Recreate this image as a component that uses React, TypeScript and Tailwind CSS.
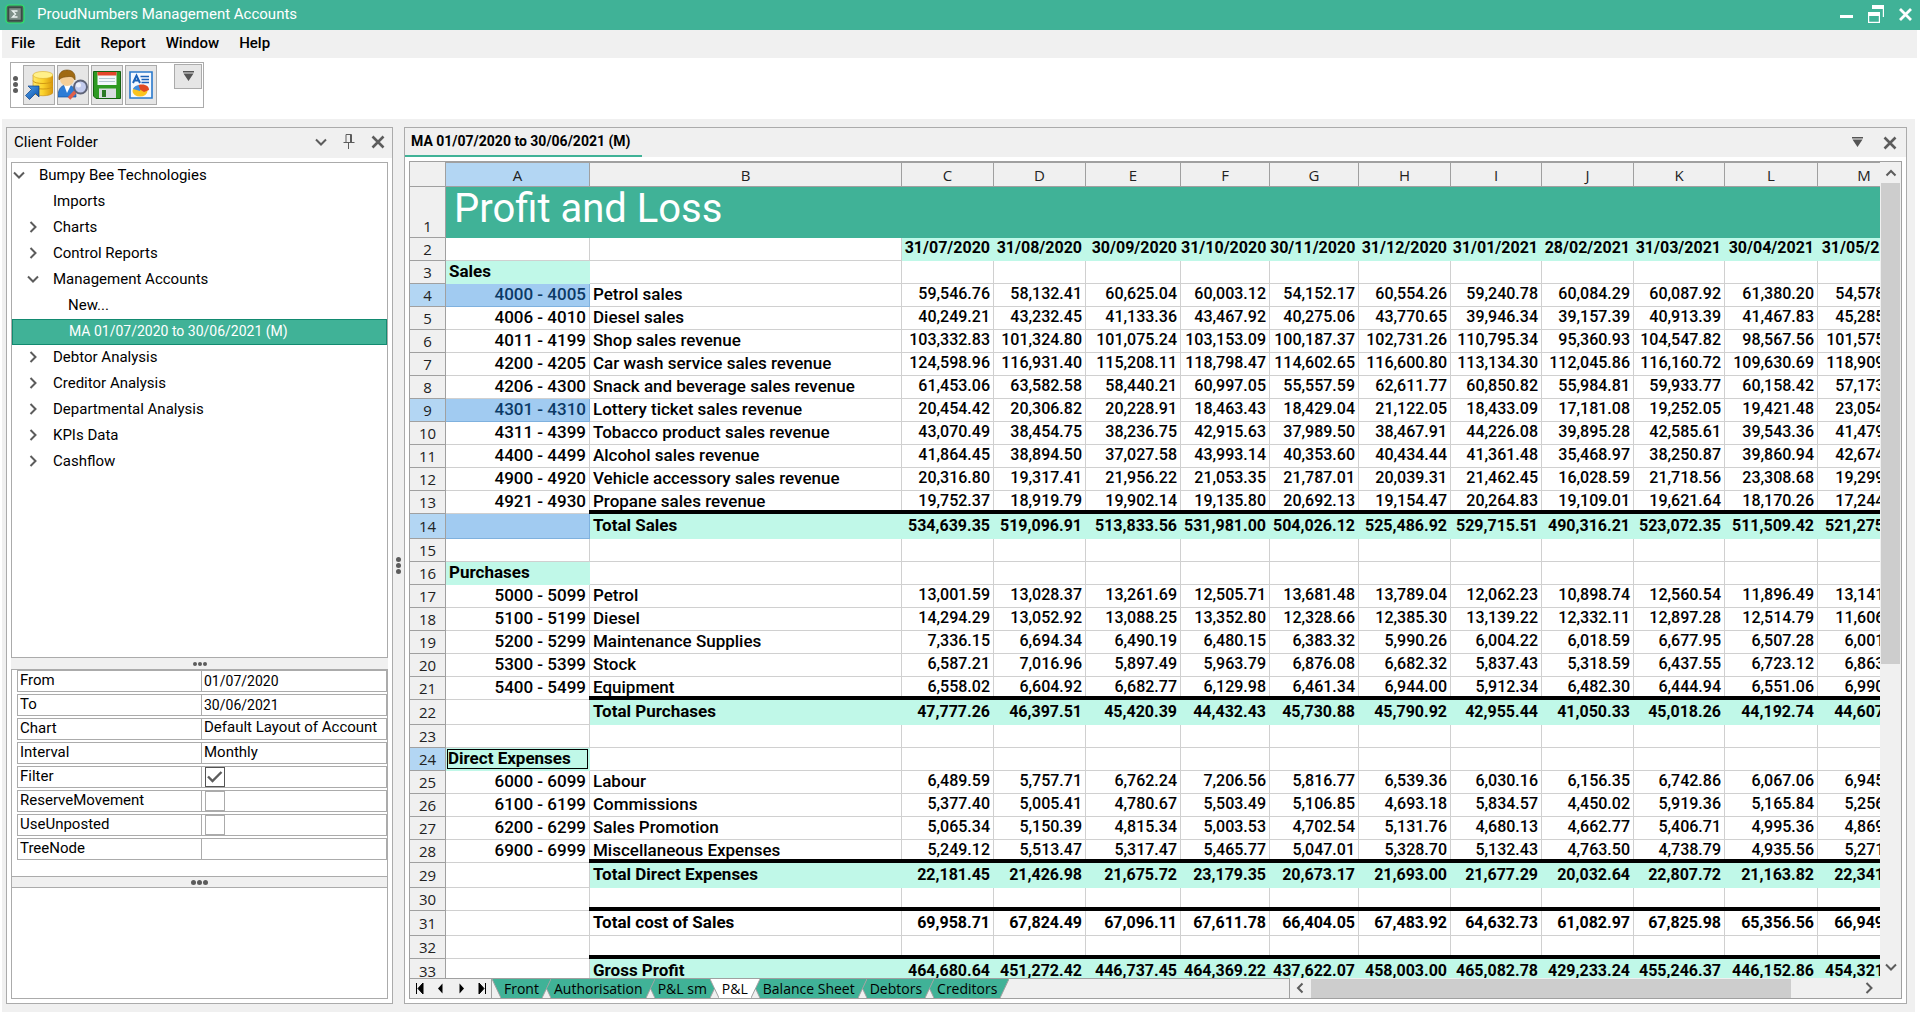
import React from "react";

type Row = { n: number; a?: string; b?: string; v?: string[]; kind?: "total" | "bold"; thick?: boolean; head?: boolean; sel?: boolean };

const cols = ["C", "D", "E", "F", "G", "H", "I", "J", "K", "L", "M"];
const colWidths = ["w-[36px]", "w-[144px]", "w-[312px]", "w-[92px]", "w-[92px]", "w-[95px]", "w-[89px]", "w-[89px]", "w-[92px]", "w-[91px]", "w-[92px]", "w-[91px]", "w-[93px]", "w-[93px]"];

const s = (t: string) => t.split(" ");

const dates = s("31/07/2020 31/08/2020 30/09/2020 31/10/2020 30/11/2020 31/12/2020 31/01/2021 28/02/2021 31/03/2021 30/04/2021 31/05/2021");

const rows: Row[] = [
  { n: 3, a: "Sales", head: true },
  { n: 4, a: "4000 - 4005", b: "Petrol sales", sel: true, v: s("59,546.76 58,132.41 60,625.04 60,003.12 54,152.17 60,554.26 59,240.78 60,084.29 60,087.92 61,380.20 54,578.33") },
  { n: 5, a: "4006 - 4010", b: "Diesel sales", v: s("40,249.21 43,232.45 41,133.36 43,467.92 40,275.06 43,770.65 39,946.34 39,157.39 40,913.39 41,467.83 45,285.60") },
  { n: 6, a: "4011 - 4199", b: "Shop sales revenue", v: s("103,332.83 101,324.80 101,075.24 103,153.09 100,187.37 102,731.26 110,795.34 95,360.93 104,547.82 98,567.56 101,575.21") },
  { n: 7, a: "4200 - 4205", b: "Car wash service sales revenue", v: s("124,598.96 116,931.40 115,208.11 118,798.47 114,602.65 116,600.80 113,134.30 112,045.86 116,160.72 109,630.69 118,909.14") },
  { n: 8, a: "4206 - 4300", b: "Snack and beverage sales revenue", v: s("61,453.06 63,582.58 58,440.21 60,997.05 55,557.59 62,611.77 60,850.82 55,984.81 59,933.77 60,158.42 57,173.12") },
  { n: 9, a: "4301 - 4310", b: "Lottery ticket sales revenue", sel: true, v: s("20,454.42 20,306.82 20,228.91 18,463.43 18,429.04 21,122.05 18,433.09 17,181.08 19,252.05 19,421.48 23,054.40") },
  { n: 10, a: "4311 - 4399", b: "Tobacco product sales revenue", v: s("43,070.49 38,454.75 38,236.75 42,915.63 37,989.50 38,467.91 44,226.08 39,895.28 42,585.61 39,543.36 41,479.31") },
  { n: 11, a: "4400 - 4499", b: "Alcohol sales revenue", v: s("41,864.45 38,894.50 37,027.58 43,993.14 40,353.60 40,434.44 41,361.48 35,468.97 38,250.87 39,860.94 42,674.45") },
  { n: 12, a: "4900 - 4920", b: "Vehicle accessory sales revenue", v: s("20,316.80 19,317.41 21,956.22 21,053.35 21,787.01 20,039.31 21,462.45 16,028.59 21,718.56 23,308.68 19,299.17") },
  { n: 13, a: "4921 - 4930", b: "Propane sales revenue", thick: true, v: s("19,752.37 18,919.79 19,902.14 19,135.80 20,692.13 19,154.47 20,264.83 19,109.01 19,621.64 18,170.26 17,244.80") },
  { n: 14, b: "Total Sales", kind: "total", sel: true, v: s("534,639.35 519,096.91 513,833.56 531,981.00 504,026.12 525,486.92 529,715.51 490,316.21 523,072.35 511,509.42 521,275.53") },
  { n: 15 },
  { n: 16, a: "Purchases", head: true },
  { n: 17, a: "5000 - 5099", b: "Petrol", v: s("13,001.59 13,028.37 13,261.69 12,505.71 13,681.48 13,789.04 12,062.23 10,898.74 12,560.54 11,896.49 13,141.20") },
  { n: 18, a: "5100 - 5199", b: "Diesel", v: s("14,294.29 13,052.92 13,088.25 13,352.80 12,328.66 12,385.30 13,139.22 12,332.11 12,897.28 12,514.79 11,606.02") },
  { n: 19, a: "5200 - 5299", b: "Maintenance Supplies", v: s("7,336.15 6,694.34 6,490.19 6,480.15 6,383.32 5,990.26 6,004.22 6,018.59 6,677.95 6,507.28 6,001.11") },
  { n: 20, a: "5300 - 5399", b: "Stock", v: s("6,587.21 7,016.96 5,897.49 5,963.79 6,876.08 6,682.32 5,837.43 5,318.59 6,437.55 6,723.12 6,863.40") },
  { n: 21, a: "5400 - 5499", b: "Equipment", thick: true, v: s("6,558.02 6,604.92 6,682.77 6,129.98 6,461.34 6,944.00 5,912.34 6,482.30 6,444.94 6,551.06 6,990.05") },
  { n: 22, b: "Total Purchases", kind: "total", v: s("47,777.26 46,397.51 45,420.39 44,432.43 45,730.88 45,790.92 42,955.44 41,050.33 45,018.26 44,192.74 44,607.78") },
  { n: 23 },
  { n: 24, a: "Direct Expenses", head: true },
  { n: 25, a: "6000 - 6099", b: "Labour", v: s("6,489.59 5,757.71 6,762.24 7,206.56 5,816.77 6,539.36 6,030.16 6,156.35 6,742.86 6,067.06 6,945.02") },
  { n: 26, a: "6100 - 6199", b: "Commissions", v: s("5,377.40 5,005.41 4,780.67 5,503.49 5,106.85 4,693.18 5,834.57 4,450.02 5,919.36 5,165.84 5,256.30") },
  { n: 27, a: "6200 - 6299", b: "Sales Promotion", v: s("5,065.34 5,150.39 4,815.34 5,003.53 4,702.54 5,131.76 4,680.13 4,662.77 5,406.71 4,995.36 4,869.05") },
  { n: 28, a: "6900 - 6999", b: "Miscellaneous Expenses", thick: true, v: s("5,249.12 5,513.47 5,317.47 5,465.77 5,047.01 5,328.70 5,132.43 4,763.50 4,738.79 4,935.56 5,271.11") },
  { n: 29, b: "Total Direct Expenses", kind: "total", v: s("22,181.45 21,426.98 21,675.72 23,179.35 20,673.17 21,693.00 21,677.29 20,032.64 22,807.72 21,163.82 22,341.48") },
  { n: 30, thick: true },
  { n: 31, b: "Total cost of Sales", kind: "bold", v: s("69,958.71 67,824.49 67,096.11 67,611.78 66,404.05 67,483.92 64,632.73 61,082.97 67,825.98 65,356.56 66,949.26") },
  { n: 32, thick: true },
  { n: 33, b: "Gross Profit", kind: "total", v: s("464,680.64 451,272.42 446,737.45 464,369.22 437,622.07 458,003.00 465,082.78 429,233.24 455,246.37 446,152.86 454,321.27") },
];

function RowHead({ n, active, tall }: { n: number; active?: boolean; tall?: boolean }) {
  return (
    <th
      scope="row"
      className={`border-r border-b border-[#a0a0a0] p-0 text-center font-['Open_Sans',sans-serif] text-[15px] font-normal text-[#222] leading-[22px] ${tall ? "align-bottom" : "align-middle"} ${active ? "bg-[#b3d6f3]" : "bg-[#f0f0f0]"}`}
    >
      {n}
    </th>
  );
}

function SheetRow({ row }: { row: Row }) {
  const strong = row.kind === "total" || row.kind === "bold";
  const mint = row.kind === "total";
  const line = row.thick
    ? "relative border-r border-[#d0d0d0] after:absolute after:bottom-0 after:-right-px after:-left-px after:h-1 after:bg-black"
    : mint
      ? "border-r border-b border-[#c0f8e8] bg-[#c0f8e8]"
      : "border-r border-b border-[#d0d0d0]";
  const text = strong ? "font-bold leading-[23px]" : "font-medium leading-5";
  return (
    <tr className={strong ? "h-[25px]" : "h-[23px]"}>
      <RowHead n={row.n} active={row.sel || row.n === 24} />
      {row.head ? (
        <td className="border-r border-b border-[#c0f8e8] bg-[#c0f8e8] p-0 align-top text-[17px] font-bold">
          {row.n === 24 ? (
            <div className="m-px h-5 border border-black text-left leading-[17px]">{row.a}</div>
          ) : (
            <div className="pl-[3px] leading-5">{row.a}</div>
          )}
        </td>
      ) : (
        <td
          className={`border-r border-b py-0 pr-[3px] pl-0 text-right align-top text-[17px] leading-5 font-medium ${row.sel ? "border-[#7fb1de] bg-[#a1cbf1] text-[#0c3a66]" : "border-[#d0d0d0]"}`}
        >
          {row.a}
        </td>
      )}
      <td className={`py-0 pr-0 pl-[3px] align-top text-[17px] ${line} ${text}`}>{row.b}</td>
      {cols.map((c, i) => (
        <td key={c} className={`py-0 pr-[3px] pl-0 text-right align-top ${line} ${text}`}>
          {row.v ? row.v[i] : null}
        </td>
      ))}
    </tr>
  );
}

function Sheet() {
  return (
    <table className="w-[1501px] table-fixed border-separate border-spacing-0 text-[16px] text-black">
      <colgroup>
        {colWidths.map((w, i) => (
          <col key={i} className={w} />
        ))}
      </colgroup>
      <thead>
        <tr className="h-[25px] font-['Open_Sans',sans-serif] text-[15px] leading-5 text-[#222]">
          <td className="border-r border-b border-[#a0a0a0] bg-[#f0f0f0] p-0" />
          {["A", "B", ...cols].map((c) => (
            <th
              key={c}
              scope="col"
              className={`border-t border-r border-b border-[#a0a0a0] p-0 font-normal ${c === "A" ? "bg-[#b3d6f3]" : "bg-[#f0f0f0]"}`}
            >
              {c}
            </th>
          ))}
        </tr>
      </thead>
      <tbody>
        <tr className="h-[51px]">
          <RowHead n={1} tall />
          <td colSpan={13} className="bg-[#40b297] py-0 pr-0 pl-2 align-top text-[40px] leading-[44px] text-white">
            Profit and Loss
          </td>
        </tr>
        <tr className="h-[23px]">
          <RowHead n={2} />
          <td className="border-r border-b border-[#d0d0d0] p-0" />
          <td className="border-r border-b border-[#d0d0d0] p-0" />
          {dates.map((d) => (
            <td key={d} className="border-b border-[#c0f8e8] bg-[#c0f8e8] py-0 pr-1 pl-0 text-right align-top leading-5 font-bold">
              {d}
            </td>
          ))}
        </tr>
        {rows.map((r) => (
          <SheetRow key={r.n} row={r} />
        ))}
      </tbody>
    </table>
  );
}

function Chevron({ dir, size = 12 }: { dir: "down" | "right" | "up" | "left"; size?: number }) {
  const d = { down: "M1 3.500l5 5 5-5", right: "M3.500 1l5 5-5 5", up: "M1.500 8.500L6 4l4.500 4.500", left: "M8.500 1.500L4 6l4.500 4.500" }[dir];
  return (
    <svg width={size} height={size} viewBox="0 0 12 12" fill="none" stroke="#5c5c5c" strokeWidth="2">
      <path d={d} />
    </svg>
  );
}

function Close() {
  return (
    <svg width="14" height="14" viewBox="0 0 14 14" stroke="#5c5c5c" strokeWidth="2.6" fill="none">
      <path d="M1.500 1.500l11 11M12.500 1.500l-11 11" />
    </svg>
  );
}

function Overflow() {
  return (
    <svg width="11" height="11" viewBox="0 0 11 11" fill="#555">
      <path d="M0 0h11v1.500H0zM0.500 2.500h10L5.500 10z" />
    </svg>
  );
}

const tree: { label: string; level: number; state?: "open" | "closed"; sel?: boolean }[] = [
  { label: "Bumpy Bee Technologies", level: 0, state: "open" },
  { label: "Imports", level: 1 },
  { label: "Charts", level: 1, state: "closed" },
  { label: "Control Reports", level: 1, state: "closed" },
  { label: "Management Accounts", level: 1, state: "open" },
  { label: "New...", level: 2 },
  { label: "MA 01/07/2020 to 30/06/2021 (M)", level: 2, sel: true },
  { label: "Debtor Analysis", level: 1, state: "closed" },
  { label: "Creditor Analysis", level: 1, state: "closed" },
  { label: "Departmental Analysis", level: 1, state: "closed" },
  { label: "KPIs Data", level: 1, state: "closed" },
  { label: "Cashflow", level: 1, state: "closed" },
];
const indent = ["pl-px", "pl-[15px]", "pl-[30px]"];

function PropRow({ id, label, children }: { id: string; label: string; children: React.ReactNode }) {
  return (
    <div className="flex h-[22px] border border-[#ababab]">
      <label htmlFor={id} className="w-[184px] shrink-0 border-r border-[#ababab] pl-[2px] leading-[18px]">
        {label}
      </label>
      <div className="flex min-w-0 flex-1 pl-[2px]">{children}</div>
    </div>
  );
}

function Check({ id, on }: { id: string; on?: boolean }) {
  return (
    <span className="relative ml-px block size-5">
      <input
        id={id}
        type="checkbox"
        defaultChecked={on}
        className="block size-5 appearance-none border border-[#ababab] bg-white checked:border-[#555]"
      />
      {on && (
        <svg className="pointer-events-none absolute inset-0" width="20" height="20" viewBox="0 0 20 20" fill="none" stroke="#5c5c5c" strokeWidth="2.4">
          <path d="M3 9.500l4.500 4.500L16.500 5" />
        </svg>
      )}
    </span>
  );
}

function Dots({ big }: { big?: boolean }) {
  return (
    <span className="flex gap-px">
      {[0, 1, 2].map((i) => (
        <span key={i} className={`rounded-full bg-[#5c5c5c] ${big ? "size-[5px]" : "size-1"}`} />
      ))}
    </span>
  );
}

function ClientFolder() {
  return (
    <aside className="flex w-[387px] shrink-0 flex-col border border-[#ababab] bg-white text-[15px]">
      <header className="flex h-[30px] shrink-0 items-center bg-[#f0f0f0] pr-[7px] pb-[2px] pl-[7px]">
        <h2 className="flex-1 leading-5">Client Folder</h2>
        <div className="flex items-center gap-4">
          <button aria-label="Options">
            <Chevron dir="down" />
          </button>
          <button aria-label="Pin">
            <svg width="12" height="16" viewBox="0 0 12 16" fill="none" stroke="#5c5c5c" strokeWidth="1">
              <path d="M3 .5h5.500v8H3zM7.500 1v8M.5 8.500h11M5.500 9v6" />
            </svg>
          </button>
          <button aria-label="Close panel">
            <Close />
          </button>
        </div>
      </header>
      <div className="flex min-h-0 flex-1 flex-col p-1">
        <ul className="min-h-0 flex-1 overflow-hidden border border-[#ababab]">
          {tree.map((t) => (
            <li key={t.label}>
              <button
                className={`flex h-[26px] w-full items-center pb-[2px] text-left ${indent[t.level]} ${t.sel ? "border border-[#128a70] bg-[#40b297] text-[14px] text-white" : ""}`}
              >
                <span className="w-[26px] shrink-0">{t.state && <Chevron dir={t.state === "open" ? "down" : "right"} />}</span>
                <span className="leading-5">{t.label}</span>
              </button>
            </li>
          ))}
        </ul>
        <div className="flex h-[11px] shrink-0 items-center justify-center bg-[#f0f0f0]">
          <Dots />
        </div>
        <div className="flex h-[208px] shrink-0 flex-col gap-[2px] border border-[#ababab] pl-[5px]">
          <PropRow id="from" label="From">
            <input id="from" defaultValue="01/07/2020" className="w-full text-[14px] leading-[18px]" />
          </PropRow>
          <PropRow id="to" label="To">
            <input id="to" defaultValue="30/06/2021" className="w-full text-[14px] leading-[18px]" />
          </PropRow>
          <PropRow id="chart" label="Chart">
            <select id="chart" className="h-4 w-full appearance-none leading-4">
              <option>Default Layout of Account</option>
            </select>
          </PropRow>
          <PropRow id="interval" label="Interval">
            <select id="interval" className="h-[18px] w-full appearance-none leading-[18px]">
              <option>Monthly</option>
            </select>
          </PropRow>
          <PropRow id="filter" label="Filter">
            <Check id="filter" on />
          </PropRow>
          <PropRow id="reserve" label="ReserveMovement">
            <Check id="reserve" />
          </PropRow>
          <PropRow id="unposted" label="UseUnposted">
            <Check id="unposted" />
          </PropRow>
          <PropRow id="node" label="TreeNode">
            <input id="node" className="w-full" />
          </PropRow>
        </div>
        <div className="flex h-[10px] shrink-0 items-center justify-center border-x border-[#ababab] bg-[#f0f0f0]">
          <Dots big />
        </div>
        <div className="h-[112px] shrink-0 border border-[#ababab]" />
      </div>
    </aside>
  );
}

const sheetTabs = ["Front", "Authorisation", "P&L sm", "P&L", "Balance Sheet", "Debtors", "Creditors"];
const active = "P&L";

/* Slanted joint between two neighbouring sheet tabs; the active tab lies on top. */
function Seam({ left, right }: { left?: string; right?: string }) {
  const fill = (t?: string) => (t === undefined ? "#f0f0f0" : t === active ? "#fff" : "#40b297");
  const back = right === active || left === undefined;
  return (
    <svg width="9" height="19" viewBox="0 0 9 19" className="shrink-0">
      {back ? (
        <>
          <path d="M0 0L4.500 9.500 0 19z" fill={fill(left)} />
          <path d="M0 0h9v19z" fill={fill(right)} />
          <path d={left ? "M0 0l9 19M4.500 9.500L0 19" : "M0 0l9 19"} fill="none" stroke="#a0a0a0" />
        </>
      ) : (
        <>
          <path d="M9 0v19L4.500 9.500z" fill={fill(right)} />
          <path d="M0 0h9L0 19z" fill={fill(left)} />
          <path d={right ? "M9 0L0 19M4.500 9.500L9 19" : "M9 0L0 19"} fill="none" stroke="#a0a0a0" />
        </>
      )}
    </svg>
  );
}

function SheetTabs() {
  return (
    <div className="flex h-5 shrink-0 bg-[#f0f0f0]">
      <div className="flex flex-1 border-t border-r border-[#a0a0a0]">
        <div className="flex w-[82px] items-center justify-between border-r border-[#a0a0a0] pr-1 pl-[5px]">
          {["M1.500 0v11M8 0L3 5.500 8 11z", "M7.500 .5L3 5.500l4.500 5z", "M3.500 .5L8 5.500l-4.500 5z", "M3 0l5 5.500L3 11zM9.500 0v11"].map((d, i) => (
            <button key={i} aria-label={["First sheet", "Previous sheet", "Next sheet", "Last sheet"][i]}>
              <svg width="11" height="11" viewBox="0 0 11 11" fill="#000" stroke="#000" strokeWidth={i % 3 ? 0 : 1}>
                <path d={d} />
              </svg>
            </button>
          ))}
        </div>
        <div role="tablist" className="flex font-['Open_Sans',sans-serif] text-[14px] leading-[18px]">
          <Seam right={sheetTabs[0]} />
          {sheetTabs.map((t, i) => (
            <React.Fragment key={t}>
              <button
                role="tab"
                aria-selected={t === active}
                className={`h-[19px] px-[3px] whitespace-nowrap ${t === active ? "bg-white" : "bg-[#40b297]"}`}
              >
                {t}
              </button>
              <Seam left={t} right={sheetTabs[i + 1]} />
            </React.Fragment>
          ))}
        </div>
      </div>
      <div className="flex w-[591px] shrink-0 items-center gap-[5px] pl-1">
        <button aria-label="Scroll left">
          <Chevron dir="left" />
        </button>
        <div className="h-[19px] w-[480px] bg-[#cdcdcd]" />
        <span className="flex-1" />
        <button aria-label="Scroll right" className="mr-[6px]">
          <Chevron dir="right" />
        </button>
      </div>
      <div className="w-[20px] shrink-0" />
    </div>
  );
}

function ToolButton({ label, children }: { label: string; children: React.ReactNode }) {
  return (
    <button aria-label={label} className="flex h-10 w-8 items-center justify-center border border-[#ababab] bg-[#e6e6e6]">
      {children}
    </button>
  );
}

function Toolbar() {
  return (
    <div className="flex h-[61px] shrink-0 items-start bg-white pt-1 pl-2">
      <div className="flex h-[46px] w-[194px] items-start gap-[2px] border border-[#ababab] pt-[2px] pl-[2px]">
        <span className="mt-[11px] mr-[3px] flex w-[5px] flex-col gap-px">
          {[0, 1, 2].map((i) => (
            <span key={i} className="size-[5px] rounded-full bg-[#5c5c5c]" />
          ))}
        </span>
        <ToolButton label="Import data">
          <svg width="28" height="30" viewBox="0 0 28 30">
            <defs>
              <linearGradient id="gold" x1="0" x2="1">
                <stop offset="0" stopColor="#ffe96b" />
                <stop offset=".5" stopColor="#fbd22b" />
                <stop offset="1" stopColor="#d9960c" />
              </linearGradient>
              <linearGradient id="arrow" x1="0" y1="0" x2="1" y2="1">
                <stop offset="0" stopColor="#4fa4ee" />
                <stop offset="1" stopColor="#0b4ea8" />
              </linearGradient>
            </defs>
            <path d="M8 5v17c0 5 20 5 20 0V5z" fill="url(#gold)" stroke="#c48a10" strokeWidth=".6" />
            <path d="M8 10.500c0 4 20 4 20 0M8 16c0 4 20 4 20 0" fill="none" stroke="#d29a14" />
            <ellipse cx="18" cy="5" rx="10" ry="3.500" fill="#fff08a" stroke="#dcae28" strokeWidth=".6" />
            <path d="M3 16h11v11l-3.500-3.500L4.500 29.500 .5 25.500 6.500 19.500z" fill="url(#arrow)" stroke="#0c3d82" strokeWidth=".7" />
          </svg>
        </ToolButton>
        <ToolButton label="Find client">
          <svg width="30" height="32" viewBox="0 0 30 32">
            <path d="M0 28c0-9 4-12 9-12s9 3 9 12z" fill="#2c7cd6" stroke="#15509b" strokeWidth=".7" />
            <path d="M6 16l3 8 4-8z" fill="#fff" />
            <circle cx="9" cy="10" r="7" fill="#f5cf98" />
            <path d="M1 11C0 4 4 1 9 1s9 3 8 10c-1-2-3-4-6-3.500C7 8 3 8 1 11z" fill="#a06a12" stroke="#6f4607" strokeWidth=".6" />
            <path d="M17.500 22.500L11 29.500" stroke="#e0604a" strokeWidth="3.500" />
            <circle cx="22.500" cy="18" r="6.500" fill="#c3cbee" stroke="#5f6478" strokeWidth="2" />
            <circle cx="20.500" cy="16" r="2.500" fill="#eef1fc" />
          </svg>
        </ToolButton>
        <ToolButton label="Save">
          <svg width="28" height="28" viewBox="0 0 28 28">
            <path d="M.5.500h27v27H3L.5 25z" fill="#2e9a22" stroke="#14620f" />
            <path d="M4.500 1h19v13h-19z" fill="#f3f8fb" />
            <path d="M4.500 1h19v3.500h-19z" fill="#e4462b" />
            <path d="M6 7.500h16M6 10.500h16" stroke="#b4c6d0" />
            <path d="M6 17.500h17V27H6z" fill="#d9dde0" />
            <path d="M9 19h4v7H9z" fill="#2c7a26" />
          </svg>
        </ToolButton>
        <ToolButton label="Report">
          <svg width="24" height="28" viewBox="0 0 24 28">
            <path d="M1 1h22v26H1z" fill="#f4f9ff" stroke="#2a79cc" strokeWidth="1.600" />
            <path d="M4 12L7.500 4.500 11 12M5.300 9.500h4.400" fill="none" stroke="#1a62b8" strokeWidth="2" />
            <path d="M11.500 5.500H20M12.500 8.500H20M12.500 11.500H20" stroke="#1a62b8" strokeWidth="1.600" />
            <ellipse cx="11" cy="20" rx="7.500" ry="5.500" fill="#fbc41f" />
            <path d="M11 20L4 18c1-3 5-4.500 8-4z" fill="#3f8de0" />
            <path d="M11 18.500L9.500 14C16 12.500 20 15 20 19l-5 2z" fill="#e04a22" />
          </svg>
        </ToolButton>
        <button aria-label="Toolbar options" className="-mt-px ml-[15px] flex h-[25px] w-7 items-center justify-center border border-[#ababab] bg-[#e6e6e6]">
          <Overflow />
        </button>
      </div>
    </div>
  );
}

export default function App() {
  return (
    <div className="flex h-screen flex-col overflow-hidden bg-white font-[Roboto,sans-serif] text-black">
      <header className="flex h-[30px] shrink-0 items-center bg-[#40b297] pr-2 pb-[2px] pl-[5px] text-white">
        <svg width="20" height="20" viewBox="0 0 20 20">
          <rect x="1" y="1" width="18" height="18" rx="3" fill="#4a6a5c" stroke="#2ee56a" strokeWidth="1.200" />
          <rect x="3.500" y="3.500" width="13" height="13" fill="#7f8f88" stroke="#3b4a44" strokeWidth="1.500" />
          <path d="M12.500 7H7.500l3 3-3 3h5" fill="none" stroke="#eef5f2" strokeWidth="1.300" />
        </svg>
        <h1 className="flex-1 pl-3 text-[15px] leading-5">ProudNumbers Management Accounts</h1>
        <div className="flex items-center gap-[15px]">
          <button aria-label="Minimise">
            <svg width="13" height="16" viewBox="0 0 13 16">
              <path d="M0 9h13v3H0z" fill="#fff" />
            </svg>
          </button>
          <button aria-label="Restore">
            <svg width="16" height="18" viewBox="0 0 16 18" fill="#fff">
              <path d="M4 0h12v12h-1.200V4H4zM0 7h12v11H0zM1.200 11v5.800h9.600V11z" fillRule="evenodd" />
            </svg>
          </button>
          <button aria-label="Close">
            <svg width="13" height="13" viewBox="0 0 13 13" stroke="#fff" strokeWidth="2.800">
              <path d="M1 1l11 11M12 1L1 12" />
            </svg>
          </button>
        </div>
      </header>

      <div className="flex min-h-0 flex-1 flex-col pr-[3px] pl-[2px]">
        <nav className="flex h-7 shrink-0 gap-5 bg-[#f0f0f0] pb-[2px] pl-[9px] text-[15px] leading-6 font-medium">
          {["File", "Edit", "Report", "Window", "Help"].map((m) => (
            <button key={m}>{m}</button>
          ))}
        </nav>
        <Toolbar />
        <main className="mr-[2px] mb-[18px] flex min-h-0 flex-1 bg-[#f0f0f0] pt-2 pr-2 pb-2 pl-1">
          <ClientFolder />
          <div className="flex w-[11px] shrink-0 items-center justify-center">
            <span className="flex flex-col gap-px">
              {[0, 1, 2].map((i) => (
                <span key={i} className="size-[5px] rounded-full bg-[#5c5c5c]" />
              ))}
            </span>
          </div>
          <section className="flex min-w-0 flex-1 flex-col border border-[#ababab] bg-white">
            <header className="flex h-[29px] shrink-0 justify-between bg-[#f0f0f0]">
              <button className="w-[237px] border-b-2 border-[#40b297] pl-[6px] text-left text-[14px] leading-[25px] font-bold whitespace-nowrap">
                MA 01/07/2020 to 30/06/2021 (M)
              </button>
              <div className="flex items-center gap-5 pr-[9px]">
                <button aria-label="Window list">
                  <Overflow />
                </button>
                <button aria-label="Close document">
                  <Close />
                </button>
              </div>
            </header>
            <div className="flex min-h-0 flex-1 flex-col p-1">
              <div className="flex min-h-0 flex-1 flex-col border border-[#a0a0a0]">
                <div className="flex min-h-0 flex-1">
                  <div className="min-w-0 flex-1 overflow-hidden">
                    <Sheet />
                  </div>
                  <div className="flex w-[21px] shrink-0 flex-col items-center bg-[#f0f0f0]">
                    <button aria-label="Scroll up" className="flex h-[21px] shrink-0 items-center">
                      <Chevron dir="up" />
                    </button>
                    <div className="h-[481px] w-[19px] bg-[#cdcdcd]" />
                    <span className="flex-1" />
                    <button aria-label="Scroll down" className="flex h-[22px] shrink-0 items-center">
                      <Chevron dir="down" />
                    </button>
                  </div>
                </div>
                <SheetTabs />
              </div>
            </div>
          </section>
        </main>
      </div>
    </div>
  );
}
